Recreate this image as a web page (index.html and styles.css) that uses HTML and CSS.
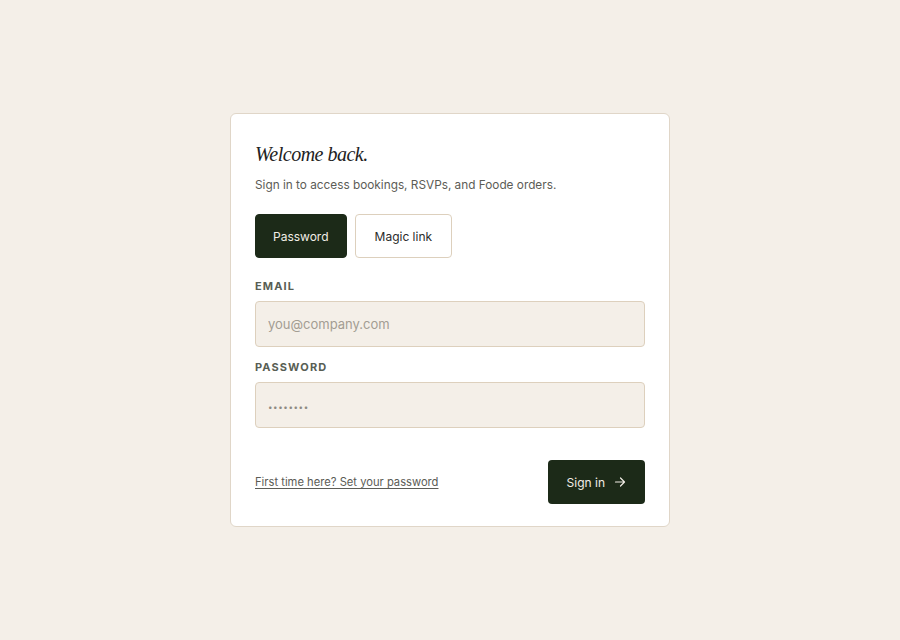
FILE: index.html
```html
<!DOCTYPE html>
<html lang="en">
<head>
<meta charset="utf-8">
<title>Sign in</title>
<link rel="stylesheet" href="styles.css">
</head>
<body>
<main class="page">
  <section class="card">
    <h1 class="title">Welcome back.</h1>
    <p class="subtitle">Sign in to access bookings, RSVPs, and Foode orders.</p>
    <div class="tabs">
      <button class="tab tab-active" type="button">Password</button>
      <button class="tab" type="button">Magic link</button>
    </div>
    <form class="form">
      <label class="field">
        <span class="label">Email</span>
        <input class="input" type="email" placeholder="you@company.com">
      </label>
      <label class="field">
        <span class="label">Password</span>
        <input class="input input-pw" type="password" placeholder="••••••••">
      </label>
      <div class="footer">
        <a class="link" href="#">First time here? Set your password</a>
        <button class="submit" type="button">Sign in
          <svg class="arrow" width="12" height="12" viewBox="0 0 12 12" fill="none" stroke="currentColor" stroke-width="1.2" stroke-linecap="round" stroke-linejoin="round"><path d="M1.5 6h9M6.5 2l4 4-4 4"/></svg>
        </button>
      </div>
    </form>
  </section>
</main>
</body>
</html>
```
FILE: styles.css
```css
* { box-sizing: border-box; }
html, body { margin: 0; padding: 0; }
body {
  background: #f4efe8;
  font-family: "Inter", "Liberation Sans", sans-serif;
  color: #1c2a18;
}
.page {
  min-height: 640px;
  display: flex;
  justify-content: center;
  padding-top: 113px;
}
.card {
  width: 440px;
  height: 414px;
  background: #fff;
  border: 1px solid #e0d6c8;
  border-radius: 6px;
  padding: 24px 24px;
}
.title {
  margin: 2px 0 0;
  font-family: "Liberation Serif", serif;
  font-style: italic;
  font-weight: 400;
  font-size: 20px;
  line-height: 28px;
  color: #222;
  letter-spacing: -0.5px;
}
.subtitle {
  margin: 8px 0 0;
  font-size: 11.8px;
  line-height: 18px;
  color: #5c5c56;
}
.tabs {
  display: flex;
  gap: 8px;
  margin-top: 20px;
}
.tab {
  height: 44px;
  padding: 0 19px;
  border: 1px solid #ddd0bd;
  border-radius: 4px;
  background: #fff;
  font-family: inherit;
  font-size: 12px;
  color: #2b2b2b;
}
.tab-active {
  padding: 0 17px;
  background: #1c2a18;
  border-color: #1c2a18;
  color: #f1ede5;
}
.form {
  margin-top: 20px;
  display: flex;
  flex-direction: column;
}
.field {
  display: flex;
  flex-direction: column;
  margin-bottom: 12px;
}
.label {
  font-size: 11px;
  font-weight: 700;
  letter-spacing: 1.1px;
  text-transform: uppercase;
  color: #585e54;
  line-height: 16px;
  margin-bottom: 7px;
}
.input {
  height: 46px;
  border: 1px solid #ddd0bd;
  border-radius: 4px;
  background: #f4efe8;
  padding: 0 12px;
  font-family: inherit;
  font-size: 13px;
  color: #222;
}
.input::placeholder { color: #a39d93; }
.input-pw::placeholder { font-size: 8px; letter-spacing: 0.6px; color: #8e8a82; }
.footer {
  margin-top: 20px;
  display: flex;
  justify-content: space-between;
  align-items: center;
}
.link {
  font-size: 11.2px;
  color: #5c5c56;
  text-decoration: underline;
  text-underline-offset: 2px;
}
.submit {
  height: 44px;
  padding: 0 19px;
  border: none;
  border-radius: 4px;
  background: #1c2a18;
  color: #f1ede5;
  font-family: inherit;
  font-size: 12px;
  display: flex;
  align-items: center;
  gap: 9px;
}
.arrow { display: block; }
```
